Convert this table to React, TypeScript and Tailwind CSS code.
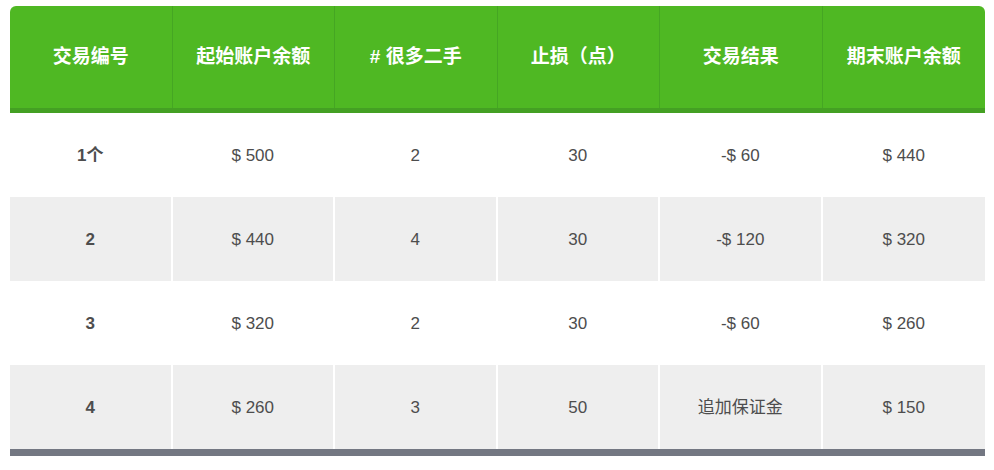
import React from 'react';

const headers = ['交易编号', '起始账户余额', '# 很多二手', '止损（点）', '交易结果', '期末账户余额'];

const rows: string[][] = [
  ['1个', '$ 500', '2', '30', '-$ 60', '$ 440'],
  ['2', '$ 440', '4', '30', '-$ 120', '$ 320'],
  ['3', '$ 320', '2', '30', '-$ 60', '$ 260'],
  ['4', '$ 260', '3', '50', '追加保证金', '$ 150'],
];

const font = { fontFamily: '"Liberation Sans", Arial, "Noto Sans CJK SC", sans-serif' };

export default function App() {
  return (
    <div className="min-h-screen bg-white pl-[10px] pr-[9px] pt-[6px]" style={font}>
      <div className="overflow-hidden rounded-t-[6px]">
        <div className="grid grid-cols-6 bg-[#4fb823] border-b-[5px] border-[#44a023]">
          {headers.map((h, i) => (
            <div
              key={h}
              className={`h-[102px] flex items-center justify-center text-[19px] font-bold text-white ${
                i < 5 ? 'border-r border-[#45a623]' : ''
              }`}
            >
              {h}
            </div>
          ))}
        </div>

        {rows.map((row, r) => (
          <div key={r} className={`grid grid-cols-6 ${r % 2 === 1 ? 'bg-[#eeeeee]' : 'bg-white'}`}>
            {row.map((cell, i) => (
              <div
                key={i}
                className={`h-[84px] flex items-center justify-center pt-[2px] text-[17px] text-[#4d4d4d] ${
                  i === 0 ? 'font-bold' : ''
                } ${i < 5 ? 'border-r-2 border-white' : ''}`}
              >
                {cell}
              </div>
            ))}
          </div>
        ))}

        <div className="h-[7px] bg-[#737782]" />
      </div>
    </div>
  );
}
